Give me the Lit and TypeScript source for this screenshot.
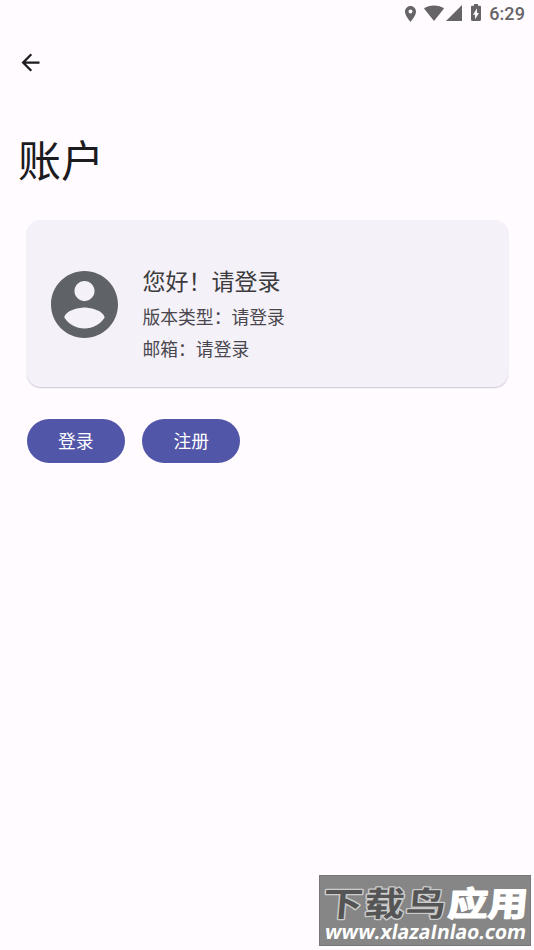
import { LitElement, html, css } from "lit";
import { customElement } from "lit/decorators.js";

@customElement("status-bar")
class StatusBar extends LitElement {
  static styles = css`
    :host { display: flex; height: 27px; justify-content: flex-end; align-items: flex-start; padding-right: 9px; box-sizing: border-box; color: #666467; }
    svg { display: block; fill: currentColor; flex: none; }
    .pin { width: 11px; height: 16px; margin: 6px 8px 0 0; }
    .wifi { width: 20px; height: 16px; margin: 5px 2px 0 0; }
    .cell { width: 16px; height: 16px; margin: 5px 9px 0 0; }
    .battery { width: 10px; height: 17px; margin: 4px 8px 0 0; }
    .time { font: 500 18px/21px Roboto, sans-serif; margin-top: 3px; letter-spacing: 0.1px; }
  `;
  render() {
    return html`
      <svg class="pin" viewBox="5 2 14 20" preserveAspectRatio="none"><path d="M12 2C8.130 2 5 5.130 5 9c0 5.250 7 13 7 13s7-7.750 7-13c0-3.870-3.130-7-7-7zm0 9.500a2.500 2.500 0 1 1 0-5 2.500 2.500 0 0 1 0 5z"/></svg>
      <svg class="wifi" viewBox="0 0 20 16"><path d="M10 16 0 3.600C2.500 1.500 6 .4 10 .4s7.500 1.100 10 3.200z"/></svg>
      <svg class="cell" viewBox="0 0 16 16"><path d="M0 16 16 0v16z"/></svg>
      <svg class="battery" viewBox="7 2 10 20" preserveAspectRatio="none"><path d="M15.670 4H14V2h-4v2H8.330C7.600 4 7 4.600 7 5.330v15.330C7 21.400 7.600 22 8.330 22h7.330c.74 0 1.340-.6 1.340-1.330V5.330C17 4.600 16.400 4 15.670 4zM11 20v-5.500H9L13 7v5.500h2L11 20z"/></svg>
      <span class="time">6:29</span>
    `;
  }
}

@customElement("account-card")
class AccountCard extends LitElement {
  static styles = css`
    :host { display: flex; box-sizing: border-box; height: 167px; margin: 0 26.500px; padding: 42px 24px 0 24.500px; border-radius: 14px; background: #f4f1f8; box-shadow: 0 1px 1.500px rgba(40, 35, 60, 0.24); color: #49474d; }
    .avatar { display: block; flex: none; width: 67px; height: 67px; margin: 9px 24.500px 0 0; }
    .greeting { font-size: 23px; line-height: 36px; margin-bottom: 2px; color: #3c3b3d; white-space: nowrap; }
    .detail { font-size: 17.800px; line-height: 32px; white-space: nowrap; }
  `;
  render() {
    return html`
      <svg class="avatar" viewBox="2 2 20 20"><path fill="#5f6368" d="M12 2C6.480 2 2 6.480 2 12s4.480 10 10 10 10-4.480 10-10S17.520 2 12 2zm0 3c1.660 0 3 1.340 3 3s-1.340 3-3 3-3-1.340-3-3 1.340-3 3-3zm0 14.200c-2.500 0-4.710-1.280-6-3.220.03-1.990 4-3.080 6-3.080 1.990 0 5.970 1.090 6 3.080-1.290 1.940-3.500 3.220-6 3.220z"/></svg>
      <div>
        <div class="greeting">您好！请登录</div>
        <div class="detail">版本类型：请登录</div>
        <div class="detail">邮箱：请登录</div>
      </div>
    `;
  }
}

@customElement("site-mark")
class SiteMark extends LitElement {
  static styles = css`
    :host { display: block; width: 212px; height: 71px; }
    svg { display: block; overflow: visible; }
    .name { font: 700 40px "Noto Sans CJK SC", sans-serif; paint-order: stroke; stroke-linejoin: round; }
    .dark { fill: #555; stroke: #ccc; stroke-width: 3px; }
    .light { fill: #fff; stroke: #fff; stroke-width: 1.800px; }
    .url { font: 700 20px "Open Sans", "Noto Sans", sans-serif; fill: #fff; }
  `;
  render() {
    return html`
      <svg width="212" height="71" viewBox="0 0 212 71">
        <rect x=".5" y=".5" width="211" height="70" fill="#868686" stroke="#777"/>
        <g transform="translate(3 41) skewX(-5) scale(1 .84)">
          <text class="name dark" x="0" y="0" textLength="123">下载鸟</text>
          <text class="name light" x="125" y="0" textLength="80">应用</text>
        </g>
        <g transform="translate(5 64) skewX(-10)">
          <text class="url" x="0" y="0" textLength="201" lengthAdjust="spacingAndGlyphs">www.xlazaInlao.com</text>
        </g>
      </svg>
    `;
  }
}

@customElement("app-root")
class AppRoot extends LitElement {
  static styles = css`
    :host { display: flex; flex-direction: column; position: relative; height: 950px; background: #fffbff; font-family: "Noto Sans CJK SC", sans-serif; }
    .back { display: block; box-sizing: border-box; padding: 0; border: 0; background: none; width: 27px; height: 27px; margin: 22px 0 0 17.400px; }
    .back svg { display: block; width: 27px; height: 27px; }
    h1 { margin: 52px 0 0 18px; font-size: 43px; line-height: 60px; height: 60px; font-weight: 400; color: #1c1b1f; }
    account-card { margin-top: 32px; }
    .actions { display: flex; gap: 17.500px; margin: 32px 0 0 26.700px; }
    .actions button { width: 98px; height: 44px; padding: 0 0 2px; border: 0; border-radius: 22px; background: #5156a9; color: #fff; font: 400 17.800px/42px "Noto Sans CJK SC", sans-serif; }
    site-mark { position: absolute; right: 3px; bottom: 4px; }
  `;
  render() {
    return html`
      <status-bar></status-bar>
      <button class="back" aria-label="返回">
        <svg viewBox="0 0 24 24" fill="#1c1b1f"><path d="M20 11H7.830l5.590-5.590L12 4l-8 8 8 8 1.410-1.410L7.830 13H20v-2z"/></svg>
      </button>
      <h1>账户</h1>
      <account-card></account-card>
      <div class="actions"><button>登录</button><button>注册</button></div>
      <site-mark></site-mark>
    `;
  }
}
